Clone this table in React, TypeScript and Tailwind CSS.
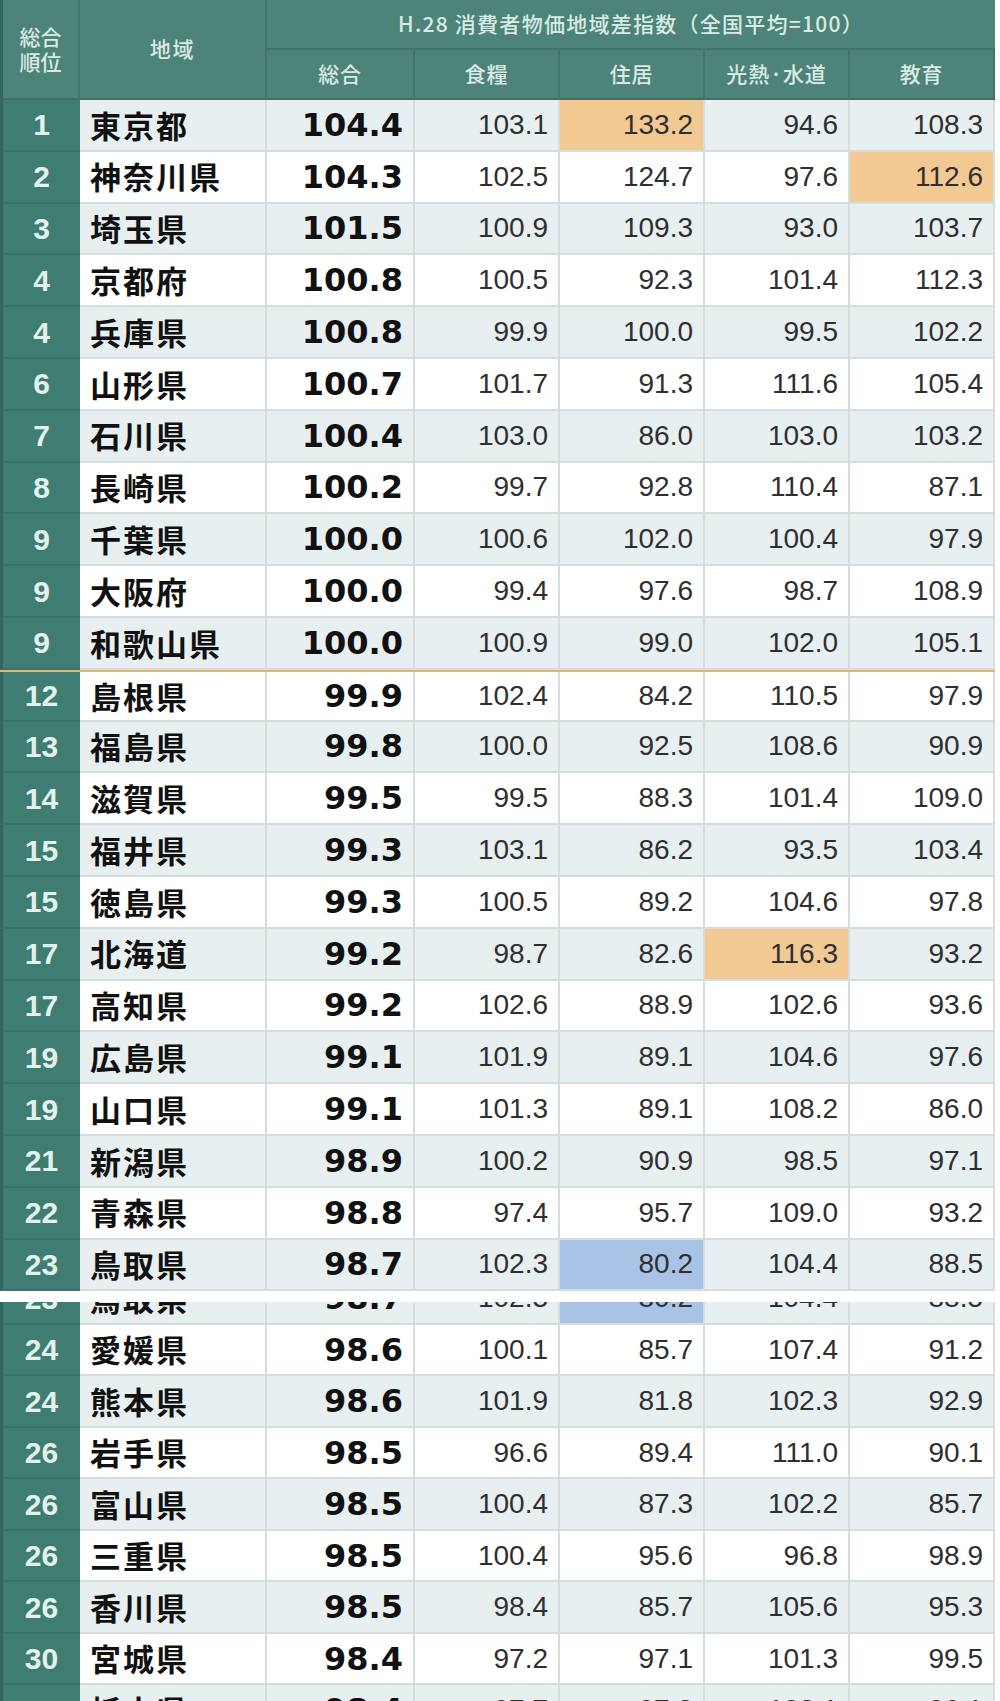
import React from "react";

type Hl = "" | "o" | "b";
type Row = {
  rank: string;
  name: string;
  total: string;
  vals: [string, string, string, string];
  hl?: [Hl, Hl, Hl, Hl];
};

const part1: Row[] = [
  { rank: "1", name: "東京都", total: "104.4", vals: ["103.1", "133.2", "94.6", "108.3"], hl: ["", "o", "", ""] },
  { rank: "2", name: "神奈川県", total: "104.3", vals: ["102.5", "124.7", "97.6", "112.6"], hl: ["", "", "", "o"] },
  { rank: "3", name: "埼玉県", total: "101.5", vals: ["100.9", "109.3", "93.0", "103.7"] },
  { rank: "4", name: "京都府", total: "100.8", vals: ["100.5", "92.3", "101.4", "112.3"] },
  { rank: "4", name: "兵庫県", total: "100.8", vals: ["99.9", "100.0", "99.5", "102.2"] },
  { rank: "6", name: "山形県", total: "100.7", vals: ["101.7", "91.3", "111.6", "105.4"] },
  { rank: "7", name: "石川県", total: "100.4", vals: ["103.0", "86.0", "103.0", "103.2"] },
  { rank: "8", name: "長崎県", total: "100.2", vals: ["99.7", "92.8", "110.4", "87.1"] },
  { rank: "9", name: "千葉県", total: "100.0", vals: ["100.6", "102.0", "100.4", "97.9"] },
  { rank: "9", name: "大阪府", total: "100.0", vals: ["99.4", "97.6", "98.7", "108.9"] },
  { rank: "9", name: "和歌山県", total: "100.0", vals: ["100.9", "99.0", "102.0", "105.1"] },
  { rank: "12", name: "島根県", total: "99.9", vals: ["102.4", "84.2", "110.5", "97.9"] },
  { rank: "13", name: "福島県", total: "99.8", vals: ["100.0", "92.5", "108.6", "90.9"] },
  { rank: "14", name: "滋賀県", total: "99.5", vals: ["99.5", "88.3", "101.4", "109.0"] },
  { rank: "15", name: "福井県", total: "99.3", vals: ["103.1", "86.2", "93.5", "103.4"] },
  { rank: "15", name: "徳島県", total: "99.3", vals: ["100.5", "89.2", "104.6", "97.8"] },
  { rank: "17", name: "北海道", total: "99.2", vals: ["98.7", "82.6", "116.3", "93.2"], hl: ["", "", "o", ""] },
  { rank: "17", name: "高知県", total: "99.2", vals: ["102.6", "88.9", "102.6", "93.6"] },
  { rank: "19", name: "広島県", total: "99.1", vals: ["101.9", "89.1", "104.6", "97.6"] },
  { rank: "19", name: "山口県", total: "99.1", vals: ["101.3", "89.1", "108.2", "86.0"] },
  { rank: "21", name: "新潟県", total: "98.9", vals: ["100.2", "90.9", "98.5", "97.1"] },
  { rank: "22", name: "青森県", total: "98.8", vals: ["97.4", "95.7", "109.0", "93.2"] },
  { rank: "23", name: "鳥取県", total: "98.7", vals: ["102.3", "80.2", "104.4", "88.5"], hl: ["", "b", "", ""] },
];

const part2: Row[] = [
  { rank: "23", name: "鳥取県", total: "98.7", vals: ["102.3", "80.2", "104.4", "88.5"], hl: ["", "b", "", ""] },
  { rank: "24", name: "愛媛県", total: "98.6", vals: ["100.1", "85.7", "107.4", "91.2"] },
  { rank: "24", name: "熊本県", total: "98.6", vals: ["101.9", "81.8", "102.3", "92.9"] },
  { rank: "26", name: "岩手県", total: "98.5", vals: ["96.6", "89.4", "111.0", "90.1"] },
  { rank: "26", name: "富山県", total: "98.5", vals: ["100.4", "87.3", "102.2", "85.7"] },
  { rank: "26", name: "三重県", total: "98.5", vals: ["100.4", "95.6", "96.8", "98.9"] },
  { rank: "26", name: "香川県", total: "98.5", vals: ["98.4", "85.7", "105.6", "95.3"] },
  { rank: "30", name: "宮城県", total: "98.4", vals: ["97.2", "97.1", "101.3", "99.5"] },
  { rank: "30", name: "栃木県", total: "98.4", vals: ["97.7", "97.8", "102.1", "96.1"] },
];

const JP = { fontFamily: '"Noto Sans CJK JP", "Noto Sans", sans-serif' };
const NUM = { fontFamily: '"Liberation Sans", Arial, sans-serif' };
const BIG = { fontFamily: '"DejaVu Sans", Verdana, sans-serif' };

function ValCell({ v, hl, light }: { v: string; hl: Hl; light: boolean }) {
  const bg = hl === "o" ? "bg-[#f2c893]" : hl === "b" ? "bg-[#a8c3e6]" : light ? "bg-[#e7eff0]" : "bg-white";
  return (
    <div
      className={`flex items-center justify-end pr-[10px] border-r-2 border-b-2 border-[#d5dddd] text-[28px] text-[#2f2f2f] ${bg}`}
      style={NUM}
    >
      {v}
    </div>
  );
}

function BodyRow({ r, light, sep, h }: { r: Row; light: boolean; sep?: boolean; h: string }) {
  const hl = r.hl ?? ["", "", "", ""];
  const cellBg = light ? "bg-[#e7eff0]" : "bg-white";
  return (
    <div
      className={`grid grid-cols-[80px_187px_148px_145px_145px_145px_145px] shrink-0 ${h} ${sep ? "border-t-2 border-[#e2b47c]" : ""}`}
    >
      <div
        className="flex items-center justify-center bg-[#3f7c71] border-l-[3px] border-l-[#33665e] border-b-2 border-b-[#3a7268] text-[30px] font-bold text-[#e2f2ec]"
        style={NUM}
      >
        {r.rank}
      </div>
      <div
        className={`flex items-center pl-[10px] border-r-2 border-b-2 border-[#d5dddd] text-[31px] font-bold text-[#111] tracking-[0.065em] ${cellBg}`}
        style={JP}
      >
        {r.name}
      </div>
      <div
        className={`flex items-center justify-end pr-[10px] border-r-2 border-b-2 border-[#d5dddd] text-[32px] font-bold text-[#111] ${cellBg}`}
        style={BIG}
      >
        {r.total}
      </div>
      {r.vals.map((v, i) => (
        <ValCell key={i} v={v} hl={hl[i]} light={light} />
      ))}
    </div>
  );
}

function Header() {
  return (
    <div
      className="grid grid-cols-[80px_187px_148px_145px_145px_145px_145px] grid-rows-[50px_50px] bg-[#4d8379] text-[#d8ebe4] font-medium"
      style={JP}
    >
      <div className="row-span-2 flex flex-col items-center justify-center text-[21px] leading-[25px] border-l-[3px] border-l-[#33665e] border-r-2 border-r-[#447469] border-b-2 border-b-[#3f7067]">
        <span>総合</span>
        <span>順位</span>
      </div>
      <div className="row-span-2 flex items-center justify-center text-[21px] tracking-[0.08em] border-r-2 border-[#447469] border-b-2 border-b-[#3f7067]">
        地域
      </div>
      <div className="col-span-5 flex items-center justify-center text-[21px] tracking-[0.06em] border-b-2 border-[#447469]">
        H.28 消費者物価地域差指数（全国平均=100）
      </div>
      {["総合", "食糧", "住居", "光熱·水道", "教育"].map((t, i) => (
        <div
          key={i}
          className="flex items-center justify-center text-[21px] tracking-[0.04em] border-r-2 border-[#447469] border-b-2 border-b-[#3f7067]"
        >
          {t}
        </div>
      ))}
    </div>
  );
}

export default function App() {
  return (
    <div className="w-[1000px] h-[1701px] overflow-hidden bg-white">
      <div className="w-[995px] flex flex-col">
        <Header />
        {part1.map((r, i) => (
          <BodyRow key={i} r={r} light={i % 2 === 0} sep={i === 11} h="h-[51.8px]" />
        ))}
      </div>
      <div className="w-[995px] mt-[11px] h-[399px] overflow-hidden flex flex-col">
        <div className="-mt-[29px] flex flex-col">
          {part2.map((r, i) => (
            <BodyRow key={i} r={r} light={i % 2 === 0} h="h-[51.5px]" />
          ))}
        </div>
      </div>
    </div>
  );
}
